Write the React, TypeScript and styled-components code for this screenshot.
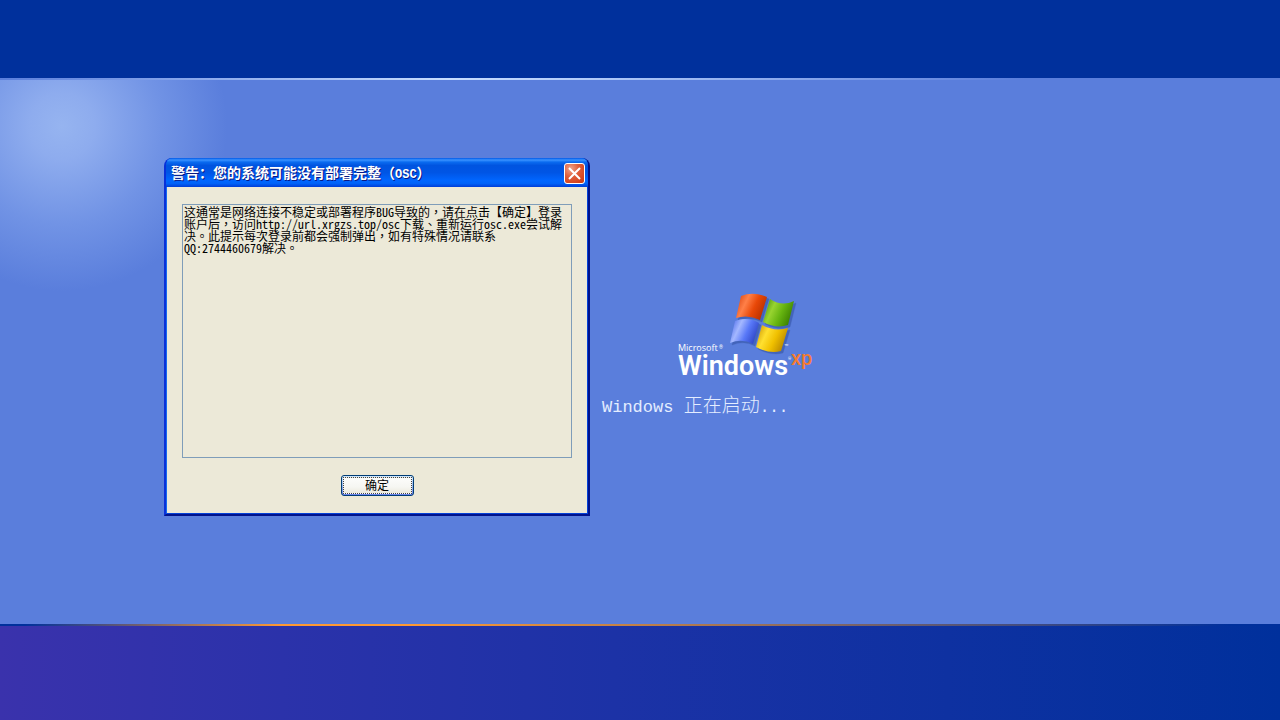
import React from "react";
import styled, { createGlobalStyle } from "styled-components";

const song = `"Noto Sans CJK SC", "Liberation Mono", monospace`;

const GlobalStyle = createGlobalStyle`
  * { box-sizing: border-box; }
  body { margin: 0; background: #00309c; }
`;

const Screen = styled.div`
  min-height: 100vh;
  display: grid;
  grid-template-rows: 78px 1fr 96px;
  font-family: ${song};
  overflow: hidden;
`;

const TopBand = styled.header`
  background: #00309c;
`;

const Stage = styled.main`
  display: flex;
  align-items: flex-start;
  padding: 78px 0 0 164px;
  border-top: 2px solid;
  border-image: linear-gradient(90deg, #5a7edc 0, #c7ddff 35%, #b4cdfa 45%, #5a7edc 80%) 1;
  background: radial-gradient(circle 165px at 62px 46px, #96b4f0 0, #8eacee 20%, #7193e5 60%, #5a7edc 100%) #5a7edc;
`;

const BottomBand = styled.footer`
  border-top: 2px solid;
  border-image: linear-gradient(90deg, #00309c 0, #00309c 2%, #ff9933 22%, #ff9933 32%, #c08048 50%, #00309c 96%) 1;
  background: linear-gradient(90deg, #3a32ac 0, #2b32aa 22%, #1c32a6 48%, #00309c 100%);
`;

const Dialog = styled.section`
  width: 426px;
  flex: none;
  border: 2px solid;
  border-top: 0;
  border-color: #0045e0 #00138c #00138c #0831d9;
  border-radius: 8px 8px 0 0;
  background: #0054e3;
  overflow: hidden;
`;

const TitleBar = styled.div`
  height: 29px;
  padding: 2px 3px 0 5px;
  display: flex;
  align-items: center;
  justify-content: space-between;
  background: linear-gradient(180deg, #0058e6 0, #3a93ff 7%, #0a6bf0 14%, #0054e0 26%, #0055e5 50%, #0066ff 78%, #0062f8 88%, #003dd7 100%);
`;

const Title = styled.h1`
  margin: 0;
  padding-bottom: 1px;
  color: #fff;
  font-size: 14px;
  line-height: 16px;
  font-weight: 700;
  text-shadow: 1px 1px #0a1883;
  white-space: pre;
`;

const CloseButton = styled.button`
  width: 21px;
  height: 21px;
  padding: 0;
  display: grid;
  place-items: center;
  border: 1px solid #fff;
  border-radius: 3px;
  background: radial-gradient(circle at 30% 25%, #f0a58c 0, #e0603c 40%, #d4421c 80%, #c03a14 100%);
`;

const DialogBody = styled.div`
  display: flex;
  flex-direction: column;
  align-items: center;
  gap: 17px;
  padding: 17px 15px;
  border: 1px solid;
  border-top: 0;
  border-color: #0045e0 #0441d8 #0441d8 #166aee;
  background: #ece9d8;
`;

const Message = styled.textarea`
  width: 100%;
  height: 254px;
  padding: 1px;
  border: 1px solid #7f9db9;
  border-radius: 0;
  outline: 0;
  resize: none;
  overflow: hidden;
  background: #ece9d8;
  color: #000;
  font: 12px/12px "Noto Sans CJK TC", "Noto Sans CJK SC", monospace;
  font-feature-settings: "hwid";
`;

const OkButton = styled.button`
  width: 73px;
  height: 21px;
  padding: 1px;
  border: 1px solid #003c74;
  border-radius: 3px;
  background: linear-gradient(180deg, #cee7ff 0, #98b8ea 50%, #6982ee 100%);
  color: #000;
  font: 12px/14px ${song};
`;

const OkFace = styled.span`
  display: block;
  height: 17px;
  border: 1px dotted #444;
  background: linear-gradient(180deg, #fcfcfb 0, #f6f6f2 60%, #eceade 100%);
`;

const Branding = styled.div`
  flex: none;
  padding: 132px 0 0 12px;
  display: flex;
  flex-direction: column;
  gap: 8px;
`;

const Logo = styled.svg`
  display: block;
  width: 142px;
  height: 94px;
  margin-left: 74px;
`;

const Status = styled.p`
  margin: 0;
  color: #e4edff;
  font-size: 19px;
  line-height: 24px;
  font-weight: 300;
  white-space: pre;
`;

const Latin = styled.span<{ $size: number }>`
  font-family: "Liberation Mono", monospace;
  font-size: ${(p) => p.$size}px;
`;

const message =
  "这通常是网络连接不稳定或部署程序BUG导致的，请在点击【确定】登录账户后，访问http://url.xrgzs.top/osc下载、重新运行osc.exe尝试解决。此提示每次登录前都会强制弹出，如有特殊情况请联系QQ:2744460679解决。";

const panes = [
  { fill: "red", d: "M741 296Q753 291 767 297L760 320Q748 314 736 318Z" },
  { fill: "green", d: "M770 299Q782 307 794 301L788 325Q776 329 763 322Z" },
  { fill: "blue", d: "M735 321Q747 316 759 323L753 344Q742 338 730 343Z" },
  { fill: "yellow", d: "M762 325Q775 332 788 328L781 351Q769 354 756 347Z" },
];

const shades = [
  { id: "red", stops: ["#d8400c", "#ff8048", "#e84808", "#b83000"] },
  { id: "green", stops: ["#3c8804", "#98d430", "#66b410", "#3c8000"] },
  { id: "blue", stops: ["#4464e8", "#a4b8ff", "#5878f8", "#3048c8"] },
  { id: "yellow", stops: ["#c89000", "#ffe030", "#f0c000", "#b88800"] },
];

function WindowsLogo() {
  return (
    <Logo viewBox="676 290 142 94" role="img" aria-label="Microsoft Windows XP">
      <defs>
        {shades.map(({ id, stops }) => (
          <linearGradient key={id} id={id} x1="0" x2="1" y1="0.1" y2="0.5">
            {stops.map((color, i) => (
              <stop key={color} offset={[0, 0.35, 0.65, 1][i]} stopColor={color} />
            ))}
          </linearGradient>
        ))}
      </defs>
      <g fill="#3454a4" stroke="#3454a4" strokeOpacity="0.3" opacity="0.6" transform="translate(2 2)">
        {panes.map((p) => (
          <path key={p.fill} d={p.d} />
        ))}
      </g>
      {panes.map((p) => (
        <path key={p.fill} d={p.d} fill={`url(#${p.fill})`} />
      ))}
      <g fill="#fff" fontFamily="Roboto, sans-serif">
        <text x="678" y="351" fontSize="9" fontFamily="'Open Sans', sans-serif">Microsoft</text>
        <text x="719" y="349" fontSize="5">®</text>
        <text x="784" y="349" fontSize="7">™</text>
        <text x="678" y="375" fontSize="27" fontWeight="600">Windows</text>
        <text x="788" y="360" fontSize="4">®</text>
        <text x="791" y="365" fontSize="20" fontWeight="500" fill="#f47b30">xp</text>
      </g>
    </Logo>
  );
}

export default function App() {
  return (
    <>
      <GlobalStyle />
      <Screen>
        <TopBand />
        <Stage>
          <Dialog role="dialog" aria-labelledby="dialog-title">
            <TitleBar>
              <Title id="dialog-title">
                警告：您的系统可能没有部署完整（<Latin $size={12}>OSC</Latin>）
              </Title>
              <CloseButton type="button" aria-label="关闭">
                <svg width="15" height="15" viewBox="0 0 15 15" aria-hidden="true">
                  <path d="M2 2l11 11M13 2l-11 11" stroke="#fff" strokeWidth="2" />
                </svg>
              </CloseButton>
            </TitleBar>
            <DialogBody>
              <Message readOnly aria-labelledby="dialog-title" spellCheck={false} defaultValue={message} />
              <OkButton type="button">
                <OkFace>确定</OkFace>
              </OkButton>
            </DialogBody>
          </Dialog>
          <Branding>
            <WindowsLogo />
            <Status>
              <Latin $size={17}>Windows </Latin>正在启动<Latin $size={16}>...</Latin>
            </Status>
          </Branding>
        </Stage>
        <BottomBand />
      </Screen>
    </>
  );
}
